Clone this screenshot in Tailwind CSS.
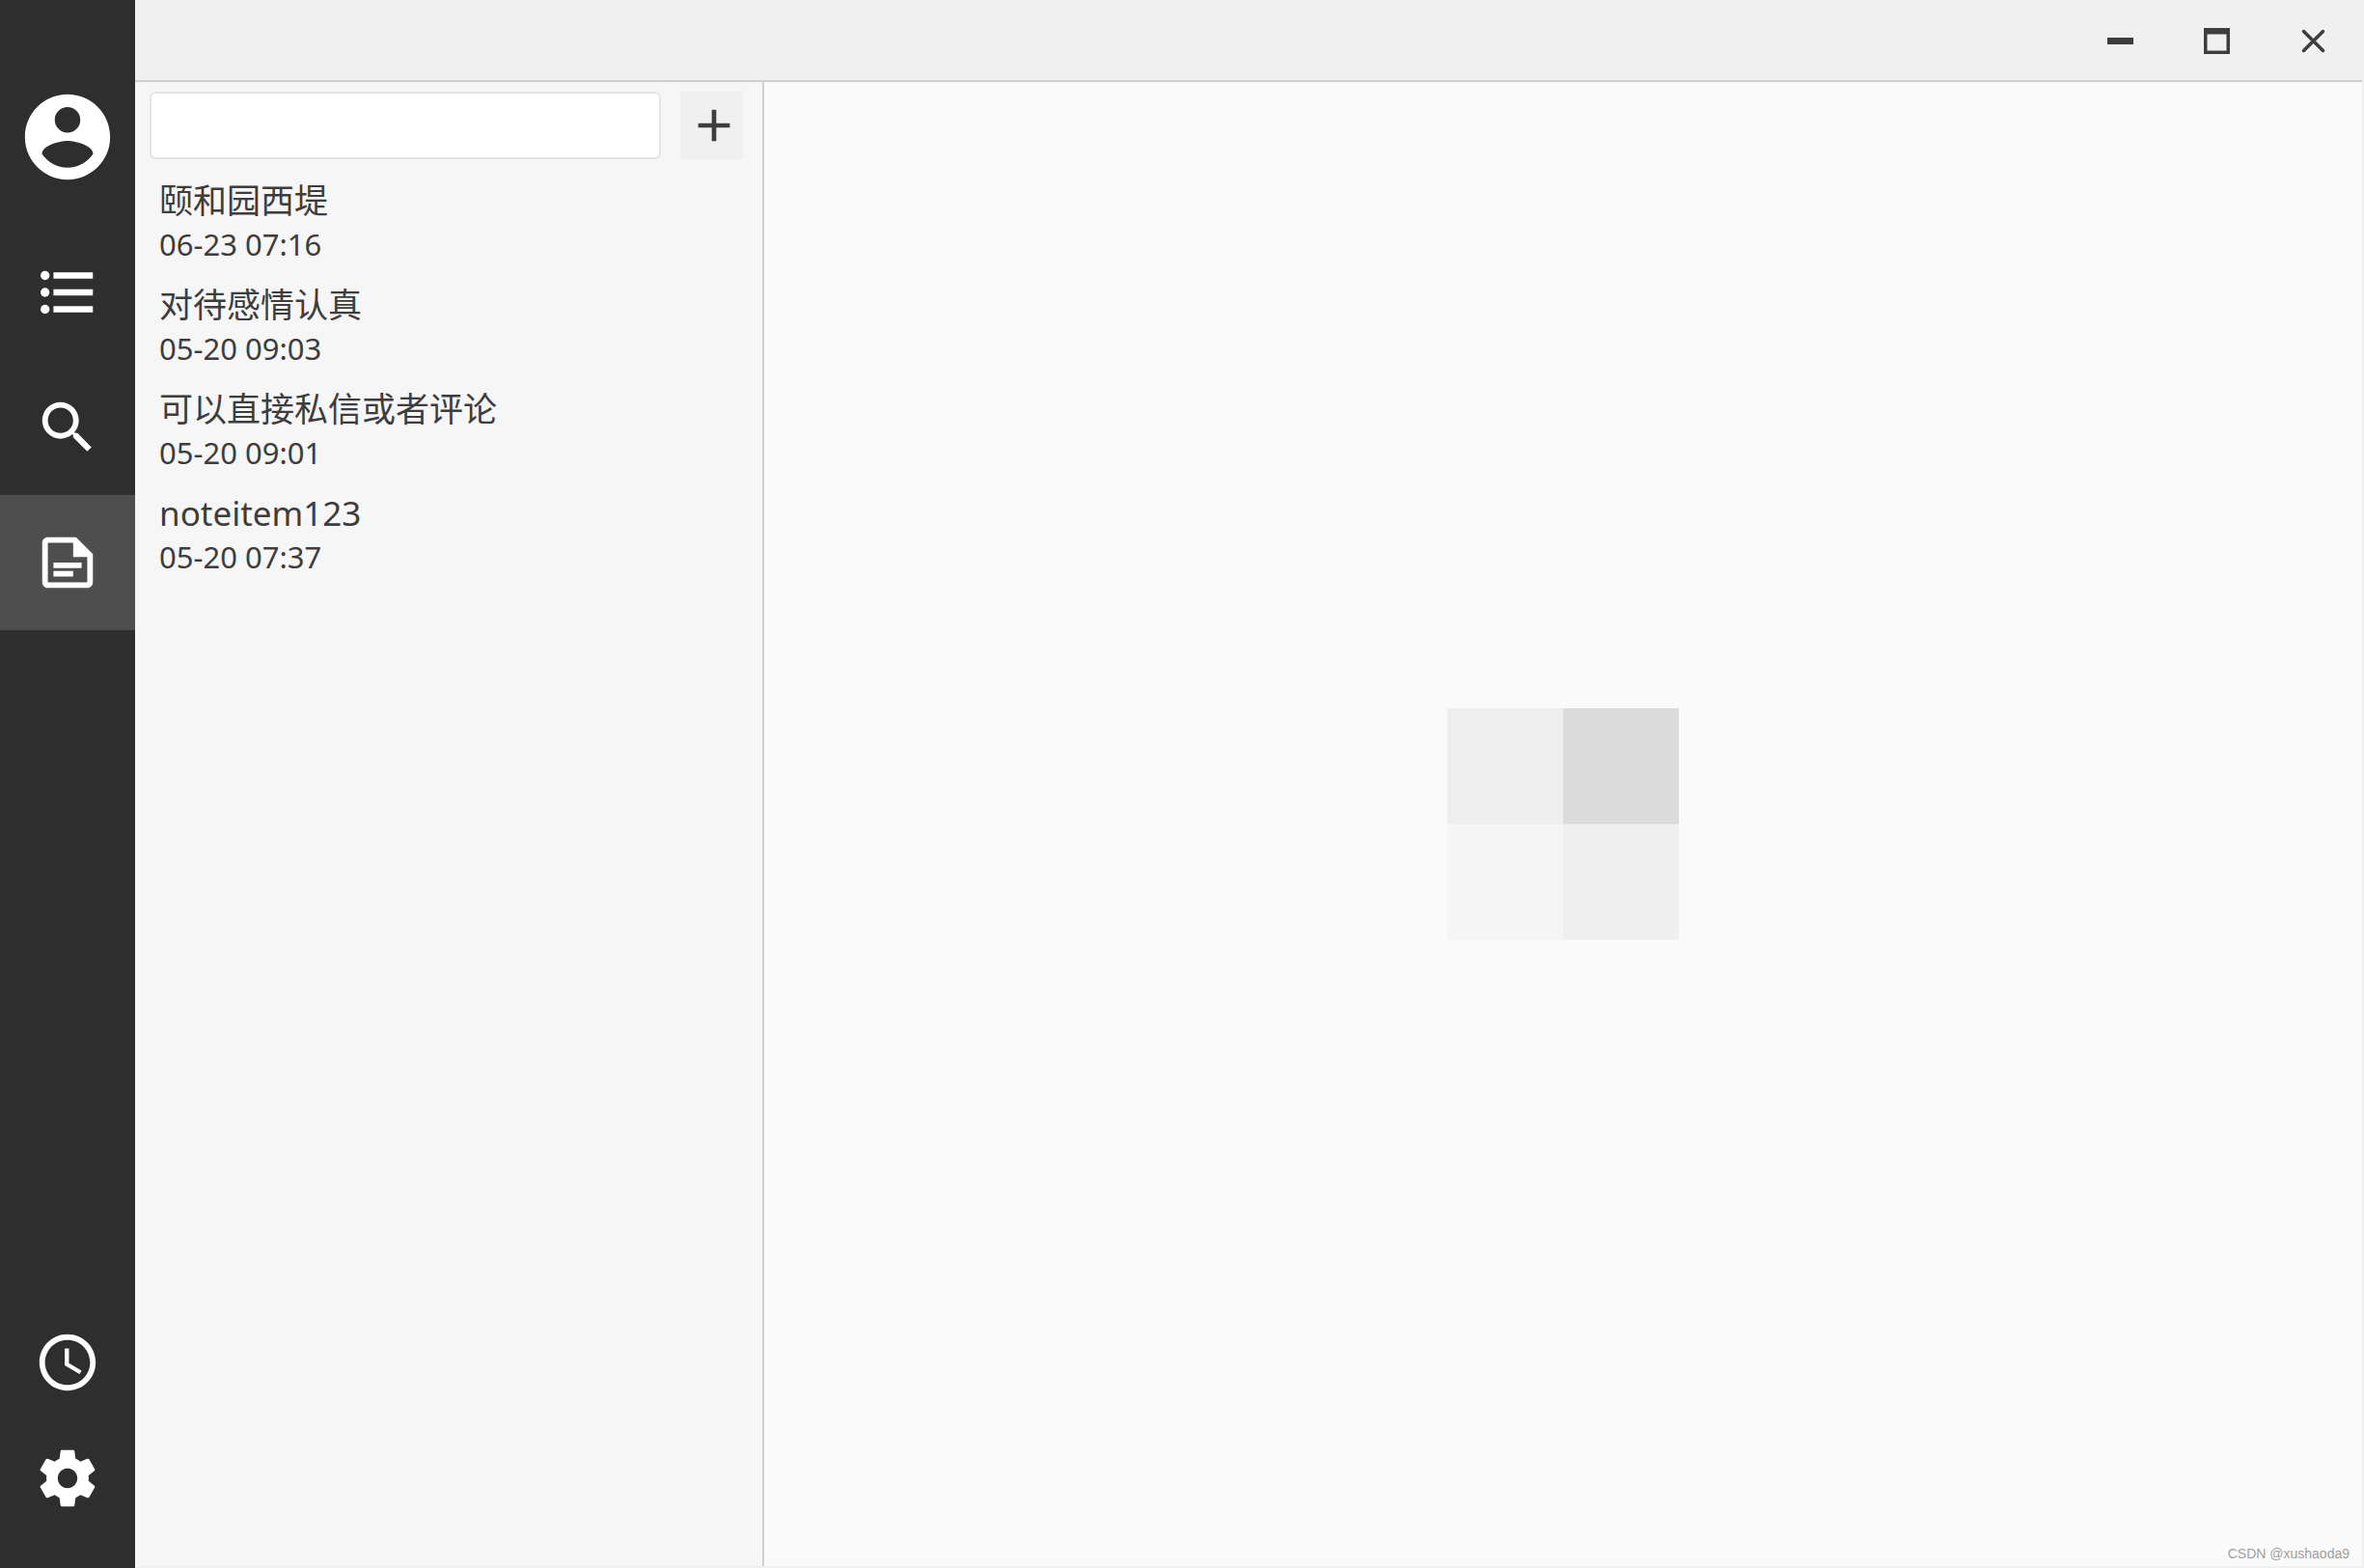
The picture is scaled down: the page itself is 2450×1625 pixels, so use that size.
<!DOCTYPE html>
<html lang="zh-CN">
<head>
<meta charset="utf-8">
<meta name="viewport" content="width=device-width, initial-scale=1">
<title>Notes</title>
<script src="https://cdn.jsdelivr.net/npm/@tailwindcss/browser@4"></script>
</head>
<body class="flex h-screen overflow-hidden bg-[#f0f0f0] font-['Noto_Sans','Noto_Sans_CJK_SC',sans-serif] text-[#3d3d3d]">

<!-- Navigation rail -->
<nav aria-label="Main" class="flex w-[140px] shrink-0 flex-col bg-[#2e2e2e] pt-[89px] pb-[33px] text-white">
  <button type="button" aria-label="Account" class="mb-[38px] flex h-[106px] items-center justify-center">
    <svg class="size-[106px]" viewBox="0 0 24 24" fill="currentColor"><path d="M12 2C6.48 2 2 6.48 2 12s4.48 10 10 10 10-4.48 10-10S17.52 2 12 2zm0 3c1.66 0 3 1.34 3 3s-1.34 3-3 3-3-1.34-3-3 1.34-3 3-3zm0 14.200c-2.500 0-4.710-1.280-6-3.220.030-1.990 4-3.080 6-3.080 1.990 0 5.970 1.090 6 3.080-1.290 1.940-3.500 3.220-6 3.220z"/></svg>
  </button>
  <button type="button" aria-label="List" class="flex h-[140px] items-center justify-center">
    <svg class="size-[70px]" viewBox="0 0 24 24" fill="currentColor"><circle cx="4" cy="6" r="1.600"/><circle cx="4" cy="12" r="1.600"/><circle cx="4" cy="18" r="1.600"/><path d="M7 4.900h14v2.200H7zM7 10.900h14v2.200H7zM7 16.900h14v2.200H7z"/></svg>
  </button>
  <button type="button" aria-label="Search" class="flex h-[140px] items-center justify-center">
    <svg class="size-[70px]" viewBox="0 0 24 24" fill="currentColor"><path d="M15.500 14h-.790l-.280-.270A6.471 6.471 0 0 0 16 9.500 6.500 6.500 0 1 0 9.500 16c1.610 0 3.090-.590 4.230-1.570l.270.280v.790l5 4.990L20.490 19l-4.990-5zm-6 0C7.010 14 5 11.990 5 9.500S7.010 5 9.500 5 14 7.010 14 9.500 11.990 14 9.500 14z"/></svg>
  </button>
  <button type="button" aria-label="Notes" aria-current="page" class="flex h-[140px] items-center justify-center bg-[#4e4e4e]">
    <svg class="size-[70px]" viewBox="0 0 24 24" fill="currentColor"><path fill-rule="evenodd" d="M15 3H5c-1.100 0-2 .9-2 2v14c0 1.100.9 2 2 2h14c1.100 0 2-.9 2-2V9l-6-6zM5 19V5h9v5h5v9H5z"/><path d="M7 12h10v2H7zM7 15h7v2H7z"/></svg>
  </button>
  <button type="button" aria-label="History" class="mt-auto flex h-[120px] items-center justify-center">
    <svg class="size-[70px]" viewBox="0 0 24 24" fill="currentColor"><path d="M11.990 2C6.470 2 2 6.480 2 12s4.470 10 9.990 10C17.520 22 22 17.520 22 12S17.520 2 11.990 2zM12 20c-4.420 0-8-3.580-8-8s3.580-8 8-8 8 3.580 8 8-3.580 8-8 8zm.5-13H11v6l5.250 3.150.75-1.230-4.500-2.670z"/></svg>
  </button>
  <button type="button" aria-label="Settings" class="flex h-[120px] items-center justify-center">
    <svg class="size-[70px]" viewBox="0 0 24 24" fill="currentColor"><path d="M19.430 12.980c.04-.32.07-.64.07-.98s-.03-.66-.07-.98l2.110-1.650c.19-.15.24-.42.12-.64l-2-3.460c-.12-.22-.39-.3-.61-.22l-2.490 1c-.52-.4-1.080-.73-1.690-.98l-.38-2.650C14.460 2.180 14.250 2 14 2h-4c-.25 0-.46.18-.49.42l-.38 2.650c-.61.25-1.170.59-1.690.98l-2.490-1c-.23-.09-.49 0-.61.22l-2 3.460c-.13.22-.07.49.12.64l2.110 1.650c-.04.32-.07.65-.07.98s.03.66.07.98l-2.110 1.650c-.19.15-.24.42-.12.64l2 3.460c.12.22.39.3.61.22l2.490-1c.52.4 1.080.73 1.690.98l.38 2.650c.03.24.24.42.49.42h4c.25 0 .46-.18.49-.42l.38-2.650c.61-.25 1.170-.59 1.690-.98l2.490 1c.23.09.49 0 .61-.22l2-3.460c.12-.22.07-.49-.12-.64l-2.110-1.650zM12 15.500c-1.930 0-3.500-1.570-3.500-3.500s1.570-3.500 3.500-3.500 3.500 1.570 3.500 3.500-1.570 3.500-3.500 3.500z"/></svg>
  </button>
</nav>

<div class="flex min-w-0 flex-1 flex-col pr-[2px] pb-[2px]">
  <!-- Window title bar -->
  <header class="flex h-[85px] shrink-0 justify-end border-b-2 border-[#d0d0d0] pt-[2px] pr-px">
    <button type="button" aria-label="Minimize" class="flex w-[100px] items-center justify-center">
      <svg class="size-[27px]" viewBox="0 0 27 27" fill="currentColor"><path d="M0 10h27v7H0z"/></svg>
    </button>
    <button type="button" aria-label="Maximize" class="flex w-[100px] items-center justify-center">
      <svg class="size-[27px]" viewBox="0 0 27 27" fill="currentColor"><path fill-rule="evenodd" d="M0 0h27v27H0zM3.500 6.500v17h20v-17z"/></svg>
    </button>
    <button type="button" aria-label="Close" class="flex w-[100px] items-center justify-center">
      <svg class="size-[27px]" viewBox="0 0 27 27" fill="none" stroke="currentColor" stroke-width="3.500" stroke-linecap="round"><path d="M3.500 3.500l20 20M23.500 3.500l-20 20"/></svg>
    </button>
  </header>

  <div class="flex min-h-0 flex-1">
    <!-- Note list -->
    <aside class="flex w-[652px] shrink-0 flex-col border-r-2 border-[#d0d0d0] bg-[#f6f6f6]">
      <div class="flex gap-5 pt-[10px] pr-5 pl-[15px]">
        <input type="search" aria-label="Search notes" class="h-[70px] min-w-0 flex-1 rounded-md border-2 border-[#e5e5e5] bg-white px-4 text-[31px] outline-none">
        <button type="button" aria-label="New note" class="flex h-[70px] w-[65px] items-center justify-center bg-[#f0f0f0] pl-1">
          <svg class="size-[56px] shrink-0" viewBox="0 0 24 24" fill="currentColor"><path d="M19 13h-6v6h-2v-6H5v-2h6V5h2v6h6z"/></svg>
        </button>
      </div>
      <ul class="flex flex-col pt-[11px]">
        <li><a href="#" class="flex h-[108px] flex-col justify-center px-[25px]"><span class="text-[35px] leading-[46px]">颐和园西堤</span><time class="text-[31px] leading-[44px]">06-23 07:16</time></a></li>
        <li><a href="#" class="flex h-[108px] flex-col justify-center px-[25px]"><span class="text-[35px] leading-[46px]">对待感情认真</span><time class="text-[31px] leading-[44px]">05-20 09:03</time></a></li>
        <li><a href="#" class="flex h-[108px] flex-col justify-center px-[25px]"><span class="text-[35px] leading-[46px]">可以直接私信或者评论</span><time class="text-[31px] leading-[44px]">05-20 09:01</time></a></li>
        <li><a href="#" class="flex h-[108px] flex-col justify-center px-[25px]"><span class="text-[35px] leading-[46px]">noteitem123</span><time class="text-[31px] leading-[44px]">05-20 07:37</time></a></li>
      </ul>
    </aside>

    <!-- Empty note area with placeholder mark -->
    <main class="relative flex min-w-0 flex-1 items-center justify-center bg-[#fafafa]">
      <div class="grid size-[240px] grid-cols-2 grid-rows-2">
        <div class="bg-[#eeeeee]"></div>
        <div class="bg-[#dbdbdb]"></div>
        <div class="bg-[#f5f5f5]"></div>
        <div class="bg-[#efefef]"></div>
      </div>
      <p class="absolute right-[13px] bottom-[3px] font-['Liberation_Sans',sans-serif] text-[14px] leading-5 text-[#a0a0a0]">CSDN @xushaoda9</p>
    </main>
  </div>
</div>
</body>
</html>
